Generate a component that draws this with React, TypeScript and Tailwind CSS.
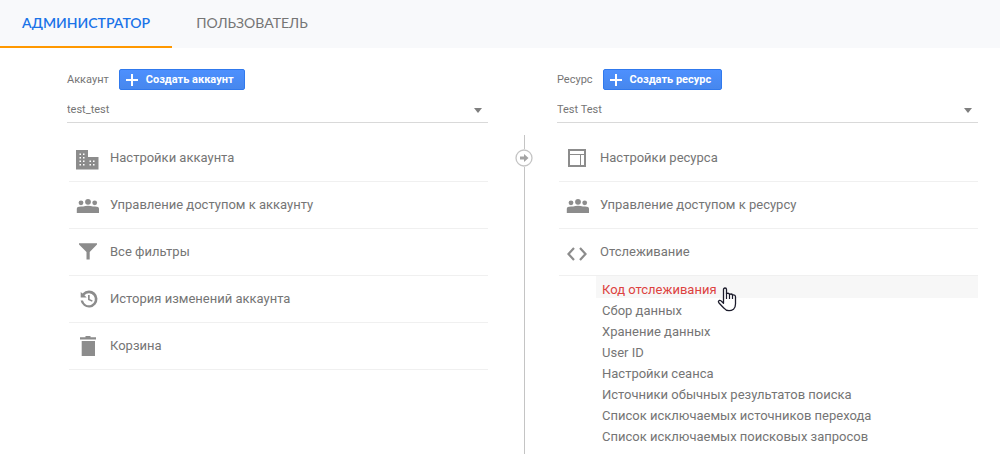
import type { ReactNode } from 'react';

const Icon = ({ children }: { children: ReactNode }) => (
  <svg viewBox="0 0 24 24" className="shrink-0 w-6 h-6 fill-[#8c8c8c]" aria-hidden="true">
    {children}
  </svg>
);

const BuildingIcon = () => (
  <Icon>
    <path d="M0 4h12v7h10.500v12.500H0z" />
    <path
      d="M3.500 7.500h1.500v1.500H3.500zM7 7.500h1.500v1.500H7zM3.500 11h1.500v1.500H3.500zM7 11h1.500v1.500H7zM3.500 14.500h1.500v1.500H3.500zM7 14.500h1.500v1.500H7zM3.500 18h1.500v1.500H3.500zM7 18h1.500v1.500H7zM13.500 14.500h1.500v1.500h-1.500zM17 14.500h1.500v1.500H17zM13.500 18h1.500v1.500h-1.500zM17 18h1.500v1.500H17z"
      fill="#fff"
    />
  </Icon>
);

const PeopleIcon = () => (
  <Icon>
    <circle cx="5" cy="9.800" r="2.400" />
    <circle cx="12" cy="8.800" r="2.900" />
    <circle cx="18.700" cy="9.800" r="2.400" />
    <path d="M.8 20v-4.300q0-2.300 4.200-2.300 1.200 0 2.200.2 2-.9 4.800-.9t4.800.9q1-.2 2.200-.2 4 0 4 2.300V20z" />
  </Icon>
);

const FilterIcon = () => (
  <Icon>
    <path d="M3 3.300h18v1.200l-7.300 7.500v7.500h-3.200V12L3 4.500z" />
  </Icon>
);

const HistoryIcon = () => (
  <Icon>
    <path d="M13 3.500a8.500 8.500 0 0 0-6.500 3L4.700 5v5.500h6L8.400 8.300A6 6 0 1 1 7 13.500H4.600A8.500 8.500 0 1 0 13 3.500zM12 8v5l4 1.800.7-1.400-3-1.400V8z" />
  </Icon>
);

const TrashIcon = () => (
  <Icon>
    <path d="M9.500 2h5v1.200H20V5.500H4V3.200h5.500zM5.700 7h13.300v15H5.700z" />
  </Icon>
);

const LayoutIcon = () => (
  <Icon>
    <path fillRule="evenodd" d="M2 3h18v18H2zM4 5v3h14V5zM4 9v10h10V9zM15 9v10h3V9z" />
  </Icon>
);

const CodeIcon = () => (
  <Icon>
    <path d="M8 8 2.500 14 8 20M14 8l5.500 6-5.500 6" fill="none" stroke="#8c8c8c" strokeWidth="2.200" />
  </Icon>
);

const HandCursor = () => (
  <svg viewBox="0 0 20 26" className="w-5 h-[26px]" aria-hidden="true">
    <path
      d="M6.500 15V3.500Q6.500 2 8 2t1.500 1.500V7.500Q12 6.700 12.500 8.300 15 7.500 15.500 9 18.500 8.500 18.500 11v7q0 3.500-2 5.300-2 1.400-4.500 1.400-3.200 0-5-2.500L2 17q-1.300-2 .3-2.500 1.500-.4 2.700 1.300l1.500 1.500z"
      fill="#fff"
      stroke="#1b1b2b"
      strokeWidth="1.300"
      strokeLinejoin="round"
    />
    <path d="M9.500 7v6M12.500 8v5M15.500 9v4" stroke="#1b1b2b" strokeWidth="1.200" />
  </svg>
);

const Row = ({ icon, children }: { icon: ReactNode; children: ReactNode }) => (
  <li className="border-b border-[#f0f0f0]">
    <a href="#" className="flex items-center gap-2.5 h-[46px] pl-[7px]">
      {icon}
      <span>{children}</span>
    </a>
  </li>
);

const Column = ({ id, label, action, value, children }: { id: string; label: string; action: string; value: string; children: ReactNode }) => (
  <section className="min-w-0 pt-[21px]">
    <div className="flex items-center gap-2.5 text-[11px]">
      <label htmlFor={id} className="pt-0.5">{label}</label>
      <button className="flex items-center h-[21px] gap-2 pl-1.5 pr-2.5 rounded-xs border border-[#3079ed] bg-linear-to-b from-[#4d90fe] to-[#4787ed] text-white font-bold">
        <svg viewBox="0 0 12 12" className="w-3 h-3" aria-hidden="true">
          <path d="M5 0h2v5h5v2H7v5H5V7H0V5h5z" fill="#fff" />
        </svg>
        <span className="pt-0.5">{action}</span>
      </button>
    </div>
    <div className="relative mt-1.5 border-b border-[#d9d9d9]">
      <select id={id} className="block w-full h-[26px] pt-0.5 appearance-none bg-transparent text-[11px] outline-none">
        <option>{value}</option>
      </select>
      <svg viewBox="0 0 8 5" className="absolute right-1.5 top-3 w-2 h-[5px] pointer-events-none" aria-hidden="true">
        <path d="M0 0h8L4 5z" fill="#7f7f7f" />
      </svg>
    </div>
    <ul className="pt-3 pl-0.5">{children}</ul>
  </section>
);

const trackingLinks = [
  'Код отслеживания',
  'Сбор данных',
  'Хранение данных',
  'User ID',
  'Настройки сеанса',
  'Источники обычных результатов поиска',
  'Список исключаемых источников перехода',
  'Список исключаемых поисковых запросов',
];

export default function App() {
  return (
    <div className="flex flex-col min-h-screen bg-white text-[#757575] text-[13px] font-[Roboto,sans-serif]">
      <nav className="flex gap-0.5 h-12 bg-[#f8f9fb] text-sm font-[Lato,sans-serif]">
        <a href="#" className="flex items-center px-[22px] border-b-2 border-[#ff9800] text-[#1a73e8] font-semibold">
          АДМИНИСТРАТОР
        </a>
        <a href="#" className="flex items-center px-[22px] border-b-2 border-transparent">
          ПОЛЬЗОВАТЕЛЬ
        </a>
      </nav>

      <main className="flex-1 grid grid-cols-[1fr_69px_1fr] pl-[67px] pr-[22px]">
        <Column id="account" label="Аккаунт" action="Создать аккаунт" value="test_test">
          <Row icon={<BuildingIcon />}>Настройки аккаунта</Row>
          <Row icon={<PeopleIcon />}>Управление доступом к аккаунту</Row>
          <Row icon={<FilterIcon />}>Все фильтры</Row>
          <Row icon={<HistoryIcon />}>История изменений аккаунта</Row>
          <Row icon={<TrashIcon />}>Корзина</Row>
        </Column>

        <div className="flex flex-col items-center pt-[87px] pl-[3px]">
          <div className="w-px h-3.5 bg-[#c4c4c4]"></div>
          <button className="shrink-0 flex" aria-label="→">
            <svg viewBox="0 0 18 18" className="w-[18px] h-[18px]" aria-hidden="true">
              <circle cx="9" cy="9" r="8" fill="#fff" stroke="#c4c4c4" strokeWidth="1.300" />
              <path d="M5 7.500h4V5l4.500 4L9 13v-2.500H5z" fill="#a3a3a3" />
            </svg>
          </button>
          <div className="w-px flex-1 bg-[#c4c4c4]"></div>
        </div>

        <Column id="property" label="Ресурс" action="Создать ресурс" value="Test Test">
          <Row icon={<LayoutIcon />}>Настройки ресурса</Row>
          <Row icon={<PeopleIcon />}>Управление доступом к ресурсу</Row>
          <Row icon={<CodeIcon />}>Отслеживание</Row>
          <li>
            <ul className="pl-[37px]">
              {trackingLinks.map((link, i) => (
                <li key={link} className={i === 0 ? 'bg-[#f7f7f7] text-[#dd4240]' : ''}>
                  <a href="#" className={`flex items-center pl-1.5 ${i === 0 ? 'h-[22px] pt-1.5' : 'h-[21px] pt-1'}`}>
                    <span className="relative">
                      {link}
                      {i === 0 && (
                        <span className="absolute left-full top-1.5">
                          <HandCursor />
                        </span>
                      )}
                    </span>
                  </a>
                </li>
              ))}
            </ul>
          </li>
        </Column>
      </main>
    </div>
  );
}
